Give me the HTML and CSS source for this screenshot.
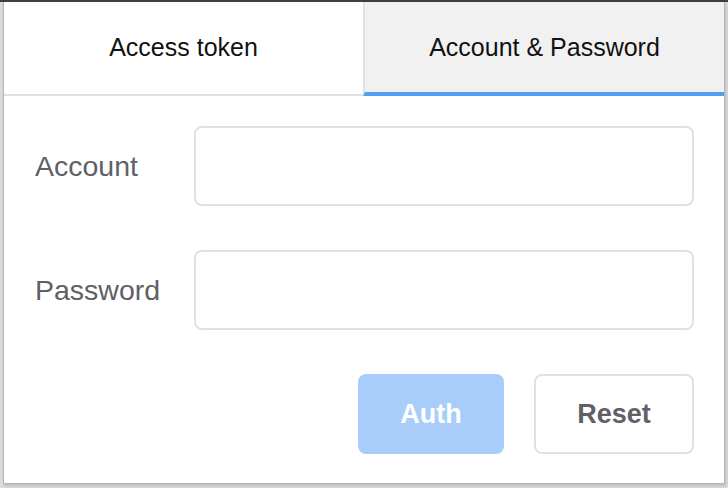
FILE: index.html
```html
<!DOCTYPE html>
<html>
<head>
<meta charset="utf-8">
<link rel="stylesheet" href="styles.css">
</head>
<body>
<div class="topbar"></div>
<div class="dialog">
  <div class="tabs">
    <div class="tab">Access token</div>
    <div class="tab active">Account &amp; Password</div>
  </div>
  <form class="form">
    <div class="row">
      <label class="label">Account</label>
      <div class="input"></div>
    </div>
    <div class="row">
      <label class="label">Password</label>
      <div class="input"></div>
    </div>
    <div class="actions">
      <button type="button" class="btn btn-primary">Auth</button>
      <button type="button" class="btn btn-default">Reset</button>
    </div>
  </form>
</div>
</body>
</html>
```
FILE: styles.css
```css
* { box-sizing: border-box; }
html, body {
  margin: 0;
  padding: 0;
  width: 728px;
  height: 488px;
  overflow: hidden;
  background: #dcdcdc;
  font-family: "Liberation Sans", Arial, sans-serif;
}
.topbar {
  height: 2px;
  background: #3e3e3e;
}
.dialog {
  margin-left: 3px;
  width: 722px;
  height: 482px;
  background: #fff;
  border: 1px solid #b4b4b4;
  border-top: none;
  box-shadow: 1px 2px 3px rgba(0,0,0,0.15);
}
.tabs {
  display: flex;
  height: 94px;
}
.tab {
  flex: 1;
  display: flex;
  align-items: center;
  justify-content: center;
  font-size: 25px;
  color: #111;
  border-bottom: 2px solid #dfe1e6;
  padding-bottom: 2px;
}
.tab.active {
  background: #f1f1f1;
  border-left: 2px solid #dfe1e6;
  border-bottom: 4px solid #569ef2;
  padding-bottom: 0;
}
.form {
  padding: 30px 30px 0 30px;
  display: flex;
  flex-direction: column;
  gap: 44px;
}
.row {
  display: flex;
  align-items: center;
}
.label {
  width: 160px;
  font-size: 28.5px;
  color: #5f6166;
  padding-left: 1px;
}
.input {
  flex: 1;
  height: 80px;
  border: 2px solid #dfe1e6;
  border-radius: 8px;
}
.actions {
  display: flex;
  justify-content: flex-end;
  gap: 30px;
}
.btn {
  height: 80px;
  border-radius: 8px;
  font-family: "Liberation Sans", Arial, sans-serif;
  font-size: 27px;
  font-weight: bold;
  padding: 0;
}
.btn-primary {
  width: 146px;
  background: #a8cdfa;
  border: 2px solid #a8cdfa;
  color: #fff;
}
.btn-default {
  width: 160px;
  background: #fff;
  border: 2px solid #dfe1e6;
  color: #5f6166;
}
```
